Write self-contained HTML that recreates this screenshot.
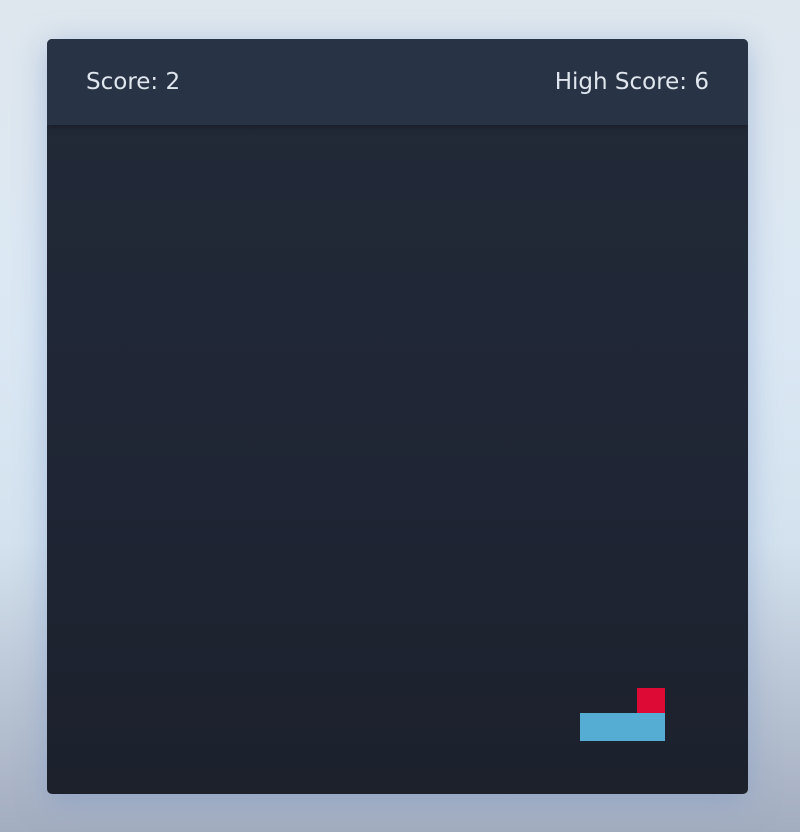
<!DOCTYPE html>
<html><head><meta charset="utf-8"><style>
html,body{margin:0;padding:0}
body{width:800px;height:832px;overflow:hidden;position:relative;
background:linear-gradient(180deg,#dfe7ee 0%,#dbe8f4 40%,#d4e2ef 65%,#b7c2d2 85%,#a3adc0 100%);
font-family:"DejaVu Sans","Liberation Sans",sans-serif}
.card{position:absolute;left:47px;top:39px;width:701px;height:755px;border-radius:5px;
background:linear-gradient(180deg,#222a38 0%,#1f2534 60%,#1c212c 100%);overflow:hidden;
box-shadow:0 6px 30px rgba(120,150,200,.5)}
.hdr{position:absolute;left:0;top:0;width:100%;height:86px;background:#283345;
box-shadow:0 3px 6px rgba(0,0,0,.25)}
.t{position:absolute;top:30px;color:#dfe6ee;font-size:23px;letter-spacing:0}
.r{position:absolute;left:590px;top:649px;width:28px;height:25px;background:#dc0a35}
.b{position:absolute;left:533px;top:674px;width:85px;height:28px;background:#55add3}
</style></head><body>
<div class="card">
<div class="hdr"><span class="t" style="left:39px">Score: 2</span><span class="t" style="right:39px">High Score: 6</span></div>
<div class="r"></div><div class="b"></div>
</div>
</body></html>
